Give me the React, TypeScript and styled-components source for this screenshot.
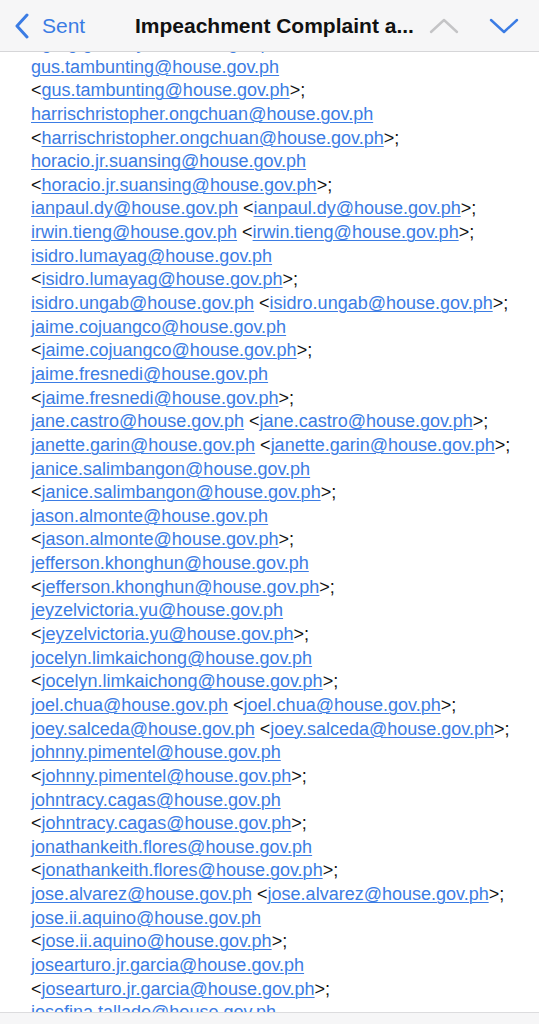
import React from "react";
import styled, { createGlobalStyle } from "styled-components";

const GlobalStyle = createGlobalStyle`
  html, body { margin: 0; padding: 0; background: #ffffff; }
  body { font-family: "Liberation Sans", Arial, Helvetica, sans-serif; overflow: hidden; }
`;

const Page = styled.div`
  position: relative;
  width: 539px;
  height: 1024px;
  overflow: hidden;
  background: #ffffff;
`;

const NavBar = styled.header`
  position: absolute;
  top: 0;
  left: 0;
  right: 0;
  height: 52px;
  background: #f6f6f7;
  border-bottom: 1px solid #d6d6d8;
  display: flex;
  align-items: center;
  padding: 0 14px 0 14px;
  box-sizing: border-box;
  z-index: 2;
`;

const BackButton = styled.div`
  display: flex;
  align-items: center;
  gap: 12px;
  color: #3b7ce4;
  font-size: 21px;
  width: 121px;
`;

const Title = styled.div`
  flex: 1;
  font-size: 21px;
  font-weight: bold;
  color: #111111;
  white-space: nowrap;
`;

const NavArrows = styled.div`
  display: flex;
  align-items: center;
  gap: 30px;
  padding-right: 6px;
`;

const BottomBar = styled.footer`
  position: absolute;
  left: 0;
  right: 0;
  bottom: 0;
  height: 11px;
  background: #f6f6f7;
  border-top: 1px solid #dcdcde;
  z-index: 2;
`;

const Body = styled.div`
  padding: 32px 0 0 31px;
  font-size: 18px;
  line-height: 23.64px;
  color: #111111;
`;

const Line = styled.div`
  white-space: nowrap;
`;

const Mail = styled.a`
  color: #3b7ce4;
  text-decoration: underline;
  text-decoration-thickness: 1px;
  text-underline-offset: 2px;
`;

type Entry = { name: string; split: boolean };

const entries: Entry[] = [
  { name: "gus.tambunting", split: true },
  { name: "harrischristopher.ongchuan", split: true },
  { name: "horacio.jr.suansing", split: true },
  { name: "ianpaul.dy", split: false },
  { name: "irwin.tieng", split: false },
  { name: "isidro.lumayag", split: true },
  { name: "isidro.ungab", split: false },
  { name: "jaime.cojuangco", split: true },
  { name: "jaime.fresnedi", split: true },
  { name: "jane.castro", split: false },
  { name: "janette.garin", split: false },
  { name: "janice.salimbangon", split: true },
  { name: "jason.almonte", split: true },
  { name: "jefferson.khonghun", split: true },
  { name: "jeyzelvictoria.yu", split: true },
  { name: "jocelyn.limkaichong", split: true },
  { name: "joel.chua", split: false },
  { name: "joey.salceda", split: false },
  { name: "johnny.pimentel", split: true },
  { name: "johntracy.cagas", split: true },
  { name: "jonathankeith.flores", split: true },
  { name: "jose.alvarez", split: false },
  { name: "jose.ii.aquino", split: true },
  { name: "josearturo.jr.garcia", split: true },
  { name: "josefina.tallado", split: true },
];

const addr = (n: string) => `${n}@house.gov.ph`;

const ChevronLeft = () => (
  <svg width="16" height="26" viewBox="0 0 16 26">
    <path d="M13 2 L3 13 L13 24" fill="none" stroke="#3b7ce4" strokeWidth="3" strokeLinecap="round" strokeLinejoin="round" />
  </svg>
);

const Chevron = ({ up, color }: { up: boolean; color: string }) => (
  <svg width="30" height="18" viewBox="0 0 30 18">
    <path
      d={up ? "M2 15 L15 3 L28 15" : "M2 3 L15 15 L28 3"}
      fill="none"
      stroke={color}
      strokeWidth="2.4"
      strokeLinecap="round"
      strokeLinejoin="round"
    />
  </svg>
);

export default function App() {
  const lines: React.ReactNode[] = [];
  lines.push(
    <Line key="first">
      &lt;<Mail href="#">{addr("greg.gasataya")}</Mail>&gt;;
    </Line>
  );
  entries.forEach((e) => {
    if (e.split) {
      lines.push(
        <Line key={e.name + "a"}>
          <Mail href="#">{addr(e.name)}</Mail>
        </Line>
      );
      lines.push(
        <Line key={e.name + "b"}>
          &lt;<Mail href="#">{addr(e.name)}</Mail>&gt;;
        </Line>
      );
    } else {
      lines.push(
        <Line key={e.name}>
          <Mail href="#">{addr(e.name)}</Mail> &lt;<Mail href="#">{addr(e.name)}</Mail>&gt;;
        </Line>
      );
    }
  });
  return (
    <Page>
      <GlobalStyle />
      <NavBar>
        <BackButton>
          <ChevronLeft />
          <span>Sent</span>
        </BackButton>
        <Title>Impeachment Complaint a...</Title>
        <NavArrows>
          <Chevron up color="#c4c4c6" />
          <Chevron up={false} color="#3b7ce4" />
        </NavArrows>
      </NavBar>
      <Body>{lines}</Body>
      <BottomBar />
    </Page>
  );
}
